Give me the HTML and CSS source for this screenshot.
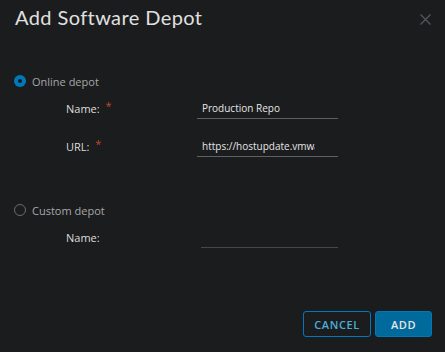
FILE: index.html
```html
<!DOCTYPE html>
<html lang="en">
<head>
  <meta charset="UTF-8" />
  <title>Add Software Depot</title>
  <link rel="stylesheet" href="styles.css">
</head>
<body>
  <div class="modal">
    <div class="modal-header">
      <h3 class="modal-title">Add Software Depot</h3>
      <button class="close" aria-label="Close">
        <svg width="11" height="11" viewBox="0 0 11 11"><path d="M0.5 0.5 L10.5 10.5 M10.5 0.5 L0.5 10.5" stroke="#56585b" stroke-width="1.2" fill="none"/></svg>
      </button>
    </div>

    <div class="modal-body">
      <label class="radio">
        <span class="radio-dot checked"></span>
        <span class="radio-label">Online depot</span>
      </label>
      <div class="field">
        <label class="field-label">Name: <span class="req">*</span></label>
        <div class="input"><span class="input-text">Production Repo</span></div>
      </div>
      <div class="field url">
        <label class="field-label">URL: <span class="req">*</span></label>
        <div class="input"><span class="input-text">https://hostupdate.vmware.com/software/VUM/PRODUCTION/main/vmw-depot-index.xml</span></div>
      </div>

      <label class="radio custom">
        <span class="radio-dot"></span>
        <span class="radio-label">Custom depot</span>
      </label>
      <div class="field">
        <label class="field-label">Name:</label>
        <div class="input shifted"><span class="input-text"></span></div>
      </div>
    </div>

    <div class="modal-footer">
      <button class="btn btn-outline">CANCEL</button>
      <button class="btn btn-primary">ADD</button>
    </div>
  </div>
</body>
</html>
```

FILE: styles.css
```css
html, body {
  margin: 0;
  padding: 0;
  height: 100%;
  background: #1b1c1e;
  font-family: 'Open Sans', sans-serif;
  color: #e8e8e8;
}

.modal {
  height: 352px;
  display: flex;
  flex-direction: column;
}

.modal-header {
  display: flex;
  justify-content: space-between;
  align-items: flex-start;
  height: 60px;
  box-sizing: border-box;
  padding: 4px 14px 0 15px;
}

.modal-title {
  margin: 0;
  font-family: 'Lato', sans-serif;
  font-size: 20px;
  line-height: 26px;
  font-weight: 400;
  color: #e0e0e0;
  letter-spacing: 0.4px;
}

.close {
  background: none;
  border: none;
  padding: 0;
  margin-top: 9px;
  cursor: pointer;
}

.modal-body {
  flex: 1;
  padding: 14px 0 0 14px;
}

.radio {
  display: flex;
  align-items: center;
  gap: 6px;
  height: 14px;
}

.radio.custom {
  margin-top: 46px;
}

.radio-dot {
  width: 10px;
  height: 10px;
  border-radius: 50%;
  border: 1px solid #6a6c6f;
  box-sizing: content-box;
  position: relative;
}

.radio-dot.checked {
  width: 12px;
  height: 12px;
  border: none;
  background: #0079b8;
}

.radio-dot.checked::after {
  content: '';
  position: absolute;
  left: 4px;
  top: 4px;
  width: 4px;
  height: 4px;
  border-radius: 50%;
  background: #1b1c1e;
}

.radio-label {
  font-size: 11px;
  color: #a7a7a7;
}

.field {
  display: flex;
  align-items: flex-start;
  margin-top: 13px;
}

.field.url {
  margin-top: 20px;
}

.field-label {
  width: 183px;
  padding-left: 52px;
  box-sizing: border-box;
  font-size: 11px;
  line-height: 15px;
  font-weight: 500;
  color: #dcdcdc;
}

.req {
  color: #c0482e;
  margin-left: 3px;
  font-weight: 400;
  position: relative;
  top: -3px;
}

.input {
  width: 141px;
  border-bottom: 1px solid #5e6064;
  padding: 0 0 2px 5px;
  box-sizing: border-box;
  height: 18px;
}

.input-text {
  display: block;
  width: 113px;
  height: 15px;
  overflow: hidden;
  white-space: nowrap;
  font-size: 10px;
  line-height: 15px;
  color: #e6e6e6;
}

.input.shifted {
  margin-left: 4px;
  width: 137px;
  border-bottom-color: #45474a;
}

.modal-footer {
  display: flex;
  justify-content: flex-end;
  gap: 4px;
  padding: 0 13px 15px 0;
}

.btn {
  height: 26px;
  font-family: 'Open Sans', sans-serif;
  font-size: 11px;
  font-weight: 600;
  letter-spacing: 0.6px;
  border-radius: 3px;
  cursor: pointer;
}

.btn-outline {
  width: 68px;
  background: transparent;
  border: 1px solid #0079b8;
  color: #49afd9;
}

.btn-primary {
  width: 57px;
  background: #006a9c;
  border: 1px solid #0079b8;
  color: #e6e6e6;
}
```
